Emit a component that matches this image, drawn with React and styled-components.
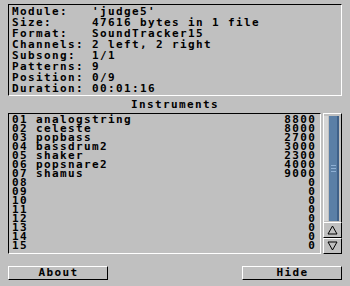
import React from "react"
import styled, { createGlobalStyle } from "styled-components"

const info = [
  ["Module:", "'judge5'"],
  ["Size:", "47616 bytes in 1 file"],
  ["Format:", "SoundTracker15"],
  ["Channels:", "2 left, 2 right"],
  ["Subsong:", "1/1"],
  ["Patterns:", "9"],
  ["Position:", "0/9"],
  ["Duration:", "00:01:16"],
]

const instruments = [
  ["analogstring", 8800],
  ["celeste", 8000],
  ["popbass", 2700],
  ["bassdrum2", 3000],
  ["shaker", 2300],
  ["popsnare2", 4000],
  ["shamus", 9000],
  ["", 0], ["", 0], ["", 0], ["", 0], ["", 0], ["", 0], ["", 0], ["", 0],
]

const Global = createGlobalStyle`
  html, body {
    margin: 0;
    padding: 0;
    background: #c0c0c0;
  }
  body {
    font-family: "DejaVu Sans Mono", "Liberation Mono", monospace;
    font-weight: bold;
    font-size: 11px;
    letter-spacing: 1.38px;
    color: #000;
  }
`

const Window = styled.div`
  width: 350px;
  height: 286px;
  box-sizing: border-box;
  padding: 4px 8px 0 8px;
  display: flex;
  flex-direction: column;
`

const InfoBox = styled.div`
  height: 92px;
  box-sizing: border-box;
  border-top: 1px solid #000;
  border-left: 1px solid #000;
  border-right: 1px solid #fff;
  border-bottom: 1px solid #fff;
  padding: 1px 0 0 3px;
`

const InfoRow = styled.div`
  display: flex;
  height: 11px;
  line-height: 11px;
  white-space: pre;
`

const Label = styled.span`
  width: 80px;
  flex-shrink: 0;
`

const Title = styled.div`
  text-align: center;
  height: 17px;
  line-height: 13px;
  padding-top: 2px;
  box-sizing: border-box;
`

const ListArea = styled.div`
  display: flex;
  gap: 2px;
  height: 141px;
`

const List = styled.div`
  flex: 1;
  box-sizing: border-box;
  border-top: 1px solid #000;
  border-left: 1px solid #000;
  border-right: 1px solid #fff;
  border-bottom: 1px solid #fff;
  padding: 1px 5px 0 3px;
`

const Row = styled.div`
  display: flex;
  height: 9px;
  line-height: 9px;
  white-space: pre;
`

const Num = styled.span`
  width: 24px;
  flex-shrink: 0;
`

const Name = styled.span`
  flex: 1;
`

const Len = styled.span`
  text-align: right;
  margin-right: -1.38px;
`

const Scroller = styled.div`
  width: 19px;
  display: flex;
  flex-direction: column;
`

const Track = styled.div`
  flex: 1;
  box-sizing: border-box;
  border-top: 1px solid #fff;
  border-left: 1px solid #fff;
  border-right: 1px solid #000;
  padding: 2px 2px 1px 0;
  display: flex;
`

const TrackEdge = styled.div`
  width: 4px;
  background: #d6d6d6;
`

const Knob = styled.div`
  flex: 1;
  margin-left: 1px;
  background: #5b7fa6;
  border-right: 2px solid #3f6088;
  display: flex;
  align-items: center;
  justify-content: center;
`

const Grip = styled.div`
  width: 5px;
  height: 7px;
  background: repeating-linear-gradient(
    to bottom,
    #8fb0d4 0 1px,
    transparent 1px 3px
  );
`

const ArrowButton = styled.div`
  height: 16px;
  box-sizing: border-box;
  border-top: 1px solid #fff;
  border-left: 1px solid #fff;
  border-right: 1px solid #000;
  border-bottom: 1px solid #000;
  display: flex;
  align-items: center;
  justify-content: center;
`

const Buttons = styled.div`
  display: flex;
  justify-content: space-between;
  margin-top: 12px;
`

const Button = styled.div`
  width: 100px;
  height: 14px;
  box-sizing: border-box;
  border-top: 1px solid #fff;
  border-left: 1px solid #fff;
  border-right: 1px solid #000;
  border-bottom: 1px solid #000;
  text-align: center;
  line-height: 12px;
  padding-left: 1px;
`

const Arrow = ({ down }) => (
  <svg width="11" height="10" viewBox="0 0 11 10">
    <path
      d={down ? "M1 1 L10 1 L5.5 9 Z" : "M5.5 1 L10 9 L1 9 Z"}
      fill="none"
      stroke="#000"
      strokeWidth="1"
    />
  </svg>
)

const App = () => (
  <Window>
    <Global />
    <InfoBox>
      {info.map(([k, v]) => (
        <InfoRow key={k}>
          <Label>{k}</Label>
          <span>{v}</span>
        </InfoRow>
      ))}
    </InfoBox>
    <Title>Instruments</Title>
    <ListArea>
      <List>
        {instruments.map(([name, len], i) => (
          <Row key={i}>
            <Num>{String(i + 1).padStart(2, "0")}</Num>
            <Name>{name}</Name>
            <Len>{len}</Len>
          </Row>
        ))}
      </List>
      <Scroller>
        <Track>
          <TrackEdge />
          <Knob>
            <Grip />
          </Knob>
        </Track>
        <ArrowButton><Arrow /></ArrowButton>
        <ArrowButton><Arrow down /></ArrowButton>
      </Scroller>
    </ListArea>
    <Buttons>
      <Button>About</Button>
      <Button>Hide</Button>
    </Buttons>
  </Window>
)

export default App
